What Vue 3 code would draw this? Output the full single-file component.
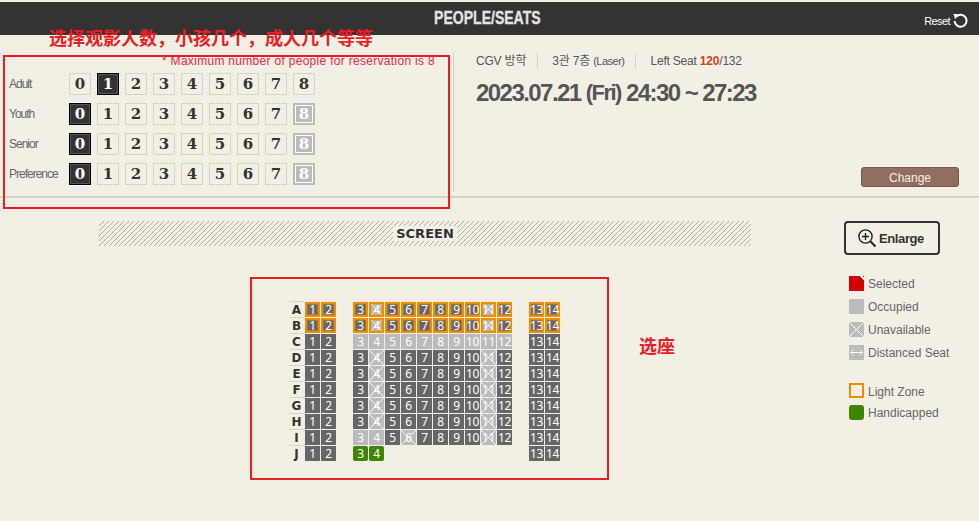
<script setup>
const counters = [
  { label: 'Adult', active: 1, off: false },
  { label: 'Youth', active: 0, off: true },
  { label: 'Senior', active: 0, off: true },
  { label: 'Preference', active: 0, off: true },
]
const nums = [0, 1, 2, 3, 4, 5, 6, 7, 8]

function numClass(c, n) {
  if (n === c.active) return 'on'
  if (n === 8 && c.off) return 'off'
  return ''
}

// seat number per grid slot, null is the aisle
const slots = [1, 2, null, 3, 4, 5, 6, 7, 8, 9, 10, 11, 12, null, 13, 14]

function seatClass(row, n) {
  if (row === 'A' || row === 'B') return n === 4 || n === 11 ? 'lz x' : 'lz'
  if (row === 'C') return n >= 3 && n <= 12 ? 'occ' : ''
  if (row === 'I') {
    if (n === 3 || n === 4) return 'occ'
    if (n === 6 || n === 11) return 'x'
    return ''
  }
  if (row === 'J') return n === 3 || n === 4 ? 'hc' : ''
  return n === 4 || n === 11 ? 'x' : ''
}

function hidden(row, n) {
  return row === 'J' && n >= 5 && n <= 12
}

const rows = 'ABCDEFGHIJ'.split('')
</script>

<template>
  <div class="page">
    <header class="bar">
      <h1>PEOPLE/SEATS</h1>
      <a class="reset">Reset
        <svg width="17" height="17" viewBox="0 0 17 17" fill="none">
          <path d="M4.2 4.6A6 6 0 1 1 2.6 9" stroke="#fff" stroke-width="2" />
          <path d="M1.5 1.8L7 2.6L3 7.2Z" fill="#fff" />
        </svg>
      </a>
    </header>

    <section class="top">
      <div class="people">
        <p class="note">* Maximum number of people for reservation is 8</p>
        <div v-for="c in counters" :key="c.label" class="count-row">
          <span class="who">{{ c.label }}</span>
          <span v-for="n in nums" :key="n" class="num" :class="numClass(c, n)"><b>{{ n }}</b></span>
        </div>
      </div>
      <div class="info">
        <div class="meta">
          <span>CGV 방학</span>
          <span>3관 7층 <small>(Laser)</small></span>
          <span>Left Seat <em>120</em>/132</span>
        </div>
        <div class="when">2023.07.21 <span class="day">(Fri)</span> 24:30 ~ 27:23</div>
        <button class="change">Change</button>
      </div>
    </section>

    <section class="bottom">
      <div class="hall">
        <div class="screen"><span>SCREEN</span></div>
        <div class="seats">
          <template v-for="r in rows" :key="r">
            <span class="letter">{{ r }}</span>
            <template v-for="(n, i) in slots" :key="r + i">
              <span v-if="n === null || hidden(r, n)"></span>
              <span v-else class="seat" :class="seatClass(r, n)">{{ n }}</span>
            </template>
          </template>
        </div>
      </div>
      <aside class="side">
        <button class="enlarge">
          <svg width="20" height="20" viewBox="0 0 20 20" fill="none" stroke="#222">
            <circle cx="8.5" cy="8.5" r="6.6" stroke-width="1.4" />
            <path d="M8.5 5v7M5 8.5h7" stroke-width="1.4" />
            <path d="M13.5 13.5L18.5 18.5" stroke-width="2" />
          </svg>
          Enlarge
        </button>
        <ul class="legend">
          <li><span class="swatch sel"></span>Selected</li>
          <li><span class="swatch occ"></span>Occupied</li>
          <li><span class="swatch una"></span>Unavailable</li>
          <li>
            <span class="swatch occ dist">
              <svg width="15" height="15" viewBox="0 0 15 15" fill="none" stroke="#fff">
                <path d="M1.5 7.5h12M4.5 4.5L1.5 7.5L4.5 10.5M10.5 4.5l3 3l-3 3" />
              </svg>
            </span>Distanced Seat
          </li>
          <li class="gap"><span class="swatch light"></span><span class="lz-text">Light Zone</span></li>
          <li><span class="swatch hand"></span>Handicapped</li>
        </ul>
      </aside>
    </section>

    <div class="mark mark-people"></div>
    <div class="mark mark-seats"></div>
    <p class="anno anno-people">选择观影人数，小孩几个，成人几个等等</p>
    <p class="anno anno-seats">选座</p>
  </div>
</template>

<style>
html, body {
  margin: 0;
  background: #f2f0e5;
}
</style>

<style scoped>
.page {
  position: relative;
  width: 979px;
  height: 521px;
  padding-top: 2px;
  box-sizing: border-box;
  overflow: hidden;
  background: #f2f0e5;
  font-family: "Liberation Sans", "Noto Sans CJK KR", sans-serif;
  color: #555;
}

.bar {
  position: relative;
  height: 33px;
  background: #333;
  display: flex;
  align-items: center;
  justify-content: center;
}
.bar h1 {
  margin: 0 0 0 -5px;
  color: #e4e4e0;
  font-size: 18px;
  font-weight: 700;
  -webkit-text-stroke: 0.3px #e4e4e0;
  transform: scaleX(0.78);
}
.reset {
  position: absolute;
  right: 10px;
  top: 10px;
  display: flex;
  align-items: center;
  gap: 2px;
  color: #fff;
  font-size: 11px;
  letter-spacing: -0.6px;
}

.top {
  display: flex;
  height: 161px;
  border-bottom: 2px solid #d6d4c7;
}
.people {
  width: 453px;
  flex: none;
  padding: 16px 0 0 9px;
  box-sizing: border-box;
}
.note {
  margin: 3px 0 4px 153px;
  height: 15px;
  line-height: 15px;
  color: #f0264a;
  font-size: 12px;
  letter-spacing: 0.3px;
  white-space: nowrap;
}
.count-row {
  display: flex;
  align-items: center;
  gap: 6px;
  height: 22px;
  margin-bottom: 8px;
}
.who {
  width: 54px;
  font-size: 12px;
  color: #666;
  letter-spacing: -1px;
}
.num {
  width: 22px;
  height: 22px;
  box-sizing: border-box;
  border: 1px solid #d6d4c7;
  display: flex;
  align-items: center;
  justify-content: center;
  font-family: "DejaVu Serif", serif;
  font-size: 15px;
  color: #333;
}
.num b {
  font-weight: 700;
}
.num.on {
  background: #333;
  border-color: #000;
  box-shadow: inset 0 0 0 1px #555;
  color: #fff;
}
.num.off {
  background: #bbb;
  border: 2px solid #bbb;
  box-shadow: inset 0 0 0 1px #fff;
  color: #fff;
}

.info {
  position: relative;
  flex: 1;
  margin-top: 17px;
  margin-bottom: 4px;
  padding-left: 22px;
  border-left: 1px solid #d6d4c7;
}
.meta {
  display: flex;
  margin-top: 1px;
  font-size: 12px;
  color: #555;
  letter-spacing: -0.2px;
  line-height: 15px;
}
.meta span {
  padding-top: 1px;
}
.meta span + span {
  margin-left: 11px;
  padding-left: 14px;
  border-left: 1px solid #d6d4c7;
}
.meta small {
  font-size: 11px;
  letter-spacing: -0.5px;
}
.meta em {
  font-style: normal;
  font-weight: 700;
  color: #d0441a;
}
.when {
  margin-top: 9px;
  font-size: 24px;
  line-height: 30px;
  font-weight: 700;
  letter-spacing: -1.55px;
  color: #555;
  white-space: nowrap;
}
.day {
  font-size: 22px;
  position: relative;
  top: -1px;
}
.change {
  position: absolute;
  left: 407px;
  top: 115px;
  width: 98px;
  height: 20px;
  padding: 1px 0 0;
  border: 1px solid #7b5547;
  border-radius: 3px;
  background: #926e5f;
  color: #f5efe6;
  font: 12px "Liberation Sans", sans-serif;
}

.bottom {
  display: flex;
}
.hall {
  width: 844px;
  flex: none;
  padding: 23px 0 0 99px;
  box-sizing: border-box;
}
.screen {
  width: 652px;
  height: 25px;
  display: flex;
  align-items: center;
  justify-content: center;
  background: url("data:image/svg+xml,%3Csvg xmlns='http://www.w3.org/2000/svg' width='5' height='5' shape-rendering='crispEdges'%3E%3Cpath fill='%23aeada1' d='M4 0h1v1H4zM3 1h1v1H3zM2 2h1v1H2zM1 3h1v1H1zM0 4h1v1H0z'/%3E%3C/svg%3E");
}
.screen span {
  padding: 0 3px;
  background: #f2f0e5;
  font-family: "DejaVu Sans", sans-serif;
  font-size: 13px;
  font-weight: 700;
  color: #333;
}
.seats {
  display: grid;
  grid-template-columns: repeat(17, 15px);
  grid-auto-rows: 15px;
  gap: 1px;
  margin: 56px 0 0 190px;
}
.letter {
  border-top: 1px solid #d6d4c7;
  margin-top: -1px;
  height: 16px;
  text-align: center;
  line-height: 17px;
  font-family: "DejaVu Sans", sans-serif;
  font-size: 12px;
  font-weight: 700;
  color: #333;
}
.seat {
  background: #666;
  color: #fff;
  text-align: center;
  font-size: 12px;
  line-height: 15px;
  font-family: "Noto Sans", sans-serif;
  letter-spacing: -0.3px;
  white-space: nowrap;
}
.seat.occ {
  background: #bbb;
}
.seat.x {
  background:
    linear-gradient(45deg, transparent 47.5%, #fff 47.5% 52.5%, transparent 52.5%),
    linear-gradient(-45deg, transparent 47.5%, #fff 47.5% 52.5%, transparent 52.5%),
    #bbb;
}
.seat.lz {
  box-shadow: inset 0 0 0 2px #f08c00, inset 0 0 0 3px rgba(240, 140, 0, 0.4);
}
.seat.hc {
  background: #3f8600;
  border-radius: 2px;
}

.side {
  flex: 1;
  padding-top: 23px;
}
.enlarge {
  width: 96px;
  height: 34px;
  padding: 0 3px 0 0;
  display: flex;
  align-items: center;
  justify-content: center;
  gap: 2px;
  border: 2px solid #333;
  border-radius: 4px;
  background: transparent;
  color: #333;
  font: 700 13px "Liberation Sans", sans-serif;
  letter-spacing: -0.4px;
}
.legend {
  list-style: none;
  margin: 21px 0 0 5px;
  padding: 0;
  font-size: 12px;
  color: #666;
}
.legend li {
  display: flex;
  align-items: center;
  gap: 4px;
  height: 15px;
  margin-bottom: 8px;
}
.legend li.gap {
  margin-top: 23px;
  margin-bottom: 7px;
}
.lz-text {
  padding-top: 2px;
}
.swatch {
  width: 15px;
  height: 15px;
  flex: none;
  box-sizing: border-box;
}
.swatch.sel {
  background: linear-gradient(225deg, #d20000 1px, #fff 1px 3px, #d20000 3px);
}
.swatch.occ {
  background: #bbb;
}
.swatch.una {
  background:
    linear-gradient(45deg, transparent 47.5%, #fff 47.5% 52.5%, transparent 52.5%),
    linear-gradient(-45deg, transparent 47.5%, #fff 47.5% 52.5%, transparent 52.5%),
    #bbb;
}
.swatch.dist svg {
  display: block;
}
.swatch.light {
  border: 2px solid #f08c00;
}
.swatch.hand {
  background: #3f8600;
  border-radius: 3px;
}

/* red notes painted over the screenshot */
.mark {
  position: absolute;
  border: 2px solid #ed1c24;
  box-sizing: border-box;
}
.mark-people {
  left: 3px;
  top: 55px;
  width: 447px;
  height: 154px;
}
.mark-seats {
  left: 250px;
  top: 277px;
  width: 359px;
  height: 203px;
}
.anno {
  position: absolute;
  margin: 0;
  color: #ed1c24;
  font-family: "Noto Sans CJK SC", sans-serif;
  font-size: 18px;
  font-weight: 700;
  line-height: 24px;
  white-space: nowrap;
}
.anno-people {
  left: 49px;
  top: 25px;
}
.anno-seats {
  left: 639px;
  top: 333px;
}
</style>
